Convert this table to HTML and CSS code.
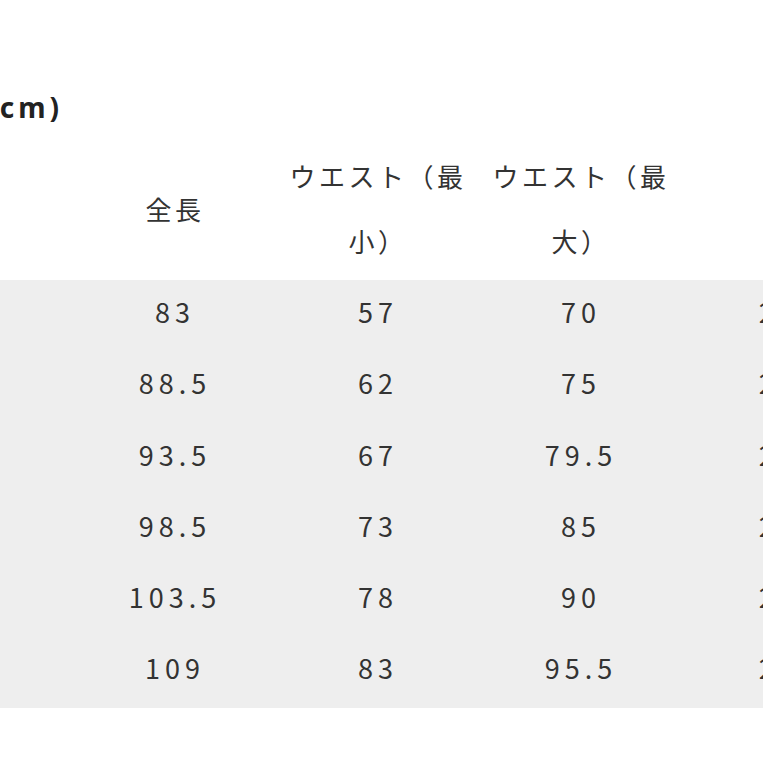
FILE: index.html
```html
<!DOCTYPE html>
<html lang="ja">
<head>
<meta charset="utf-8">
<link rel="stylesheet" href="styles.css">
</head>
<body>
<div class="page">
  <div class="title-row">
    <h2 class="title">サイズ表(cm)</h2>
  </div>
  <table class="size-table">
    <colgroup>
      <col class="c-size">
      <col class="c-std">
      <col class="c-std">
      <col class="c-std">
      <col class="c-last">
    </colgroup>
    <thead>
      <tr>
        <th class="lead">サイズ</th>
        <th>全長</th>
        <th>ウエスト（最小）</th>
        <th>ウエスト（最大）</th>
        <th>股下</th>
      </tr>
    </thead>
    <tbody>
      <tr><td class="lead">XS</td><td>83</td><td>57</td><td>70</td><td>24.5</td></tr>
      <tr><td class="lead">S</td><td>88.5</td><td>62</td><td>75</td><td>25.5</td></tr>
      <tr><td class="lead">M</td><td>93.5</td><td>67</td><td>79.5</td><td>26.5</td></tr>
      <tr><td class="lead">L</td><td>98.5</td><td>73</td><td>85</td><td>27.5</td></tr>
      <tr><td class="lead">XL</td><td>103.5</td><td>78</td><td>90</td><td>28.5</td></tr>
      <tr><td class="lead">XXL</td><td>109</td><td>83</td><td>95.5</td><td>29.5</td></tr>
    </tbody>
  </table>
</div>
</body>
</html>
```

FILE: styles.css
```css
html, body {
  margin: 0;
  padding: 0;
  background: #ffffff;
  overflow: hidden;
}

.page {
  width: 763px;
  height: 763px;
  overflow: hidden;
  padding-top: 87px;
  box-sizing: border-box;
  font-family: "Noto Sans CJK JP", "Noto Sans", sans-serif;
  color: #333333;
}

.title-row {
  width: 63px;
  display: flex;
  justify-content: flex-end;
}

.title {
  margin: 0;
  flex: none;
  white-space: nowrap;
  font-family: "Noto Sans", "Noto Sans CJK JP", sans-serif;
  font-size: 28px;
  font-weight: 700;
  line-height: 40px;
  letter-spacing: 4px;
  color: #222222;
}

.size-table {
  margin-top: 13px;
  margin-left: -129.5px;
  border-collapse: collapse;
  table-layout: fixed;
  width: 1037px;
}

.c-size, .c-std {
  width: 203px;
}

.c-last {
  width: 225px;
}

.size-table th,
.size-table td {
  padding: 0 10px;
  text-align: center;
  font-weight: 400;
}

.size-table th {
  padding-top: 3px;
  padding-bottom: 7px;
  font-size: 26px;
  letter-spacing: 3.5px;
  line-height: 65px;
  vertical-align: middle;
}

.size-table tbody tr {
  background: #eeeeee;
}

.size-table td {
  padding-top: 0;
  padding-bottom: 8.3px;
  font-size: 27px;
  letter-spacing: 5px;
  line-height: 63px;
}

.size-table .lead {
  text-align: left;
}
```
